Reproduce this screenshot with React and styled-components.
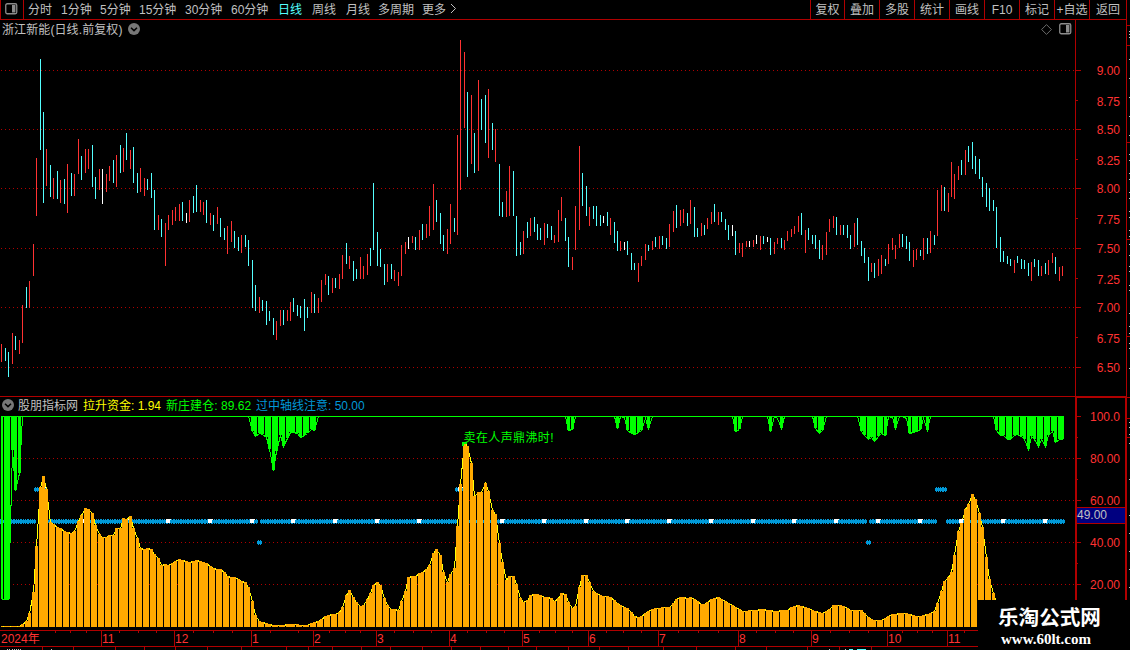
import React from "react";
import styled, { createGlobalStyle } from "styled-components";

const C = {
  line: "#b00000",
  text: "#c0c0c0",
  red: "#ff3232",
  cyan: "#54ffff",
  green: "#00ff00",
  yellow: "#ffff00",
  orange: "#ffaa00",
  blue: "#0099d8",
};

const GlobalStyle = createGlobalStyle`
  html, body { margin: 0; background: #000; overflow: hidden; }
  body { font-family: "Liberation Sans", "Noto Sans CJK SC", sans-serif; font-size: 12px; color: ${C.text}; }
  svg { display: block; }
`;

const Screen = styled.div`
  position: relative;
  width: 1130px;
  height: 650px;
  overflow: hidden;
  display: grid;
  grid-template-columns: 1127px 3px;
  background: #000;
`;

const Terminal = styled.div`
  display: flex;
  flex-direction: column;
`;

const Toolbar = styled.div`
  box-sizing: border-box;
  height: 20px;
  display: flex;
  justify-content: space-between;
  border: solid ${C.line};
  border-width: 0 1px 1px 1px;
`;

const ToolGroup = styled.div`
  display: flex;
`;

const PanelToggle = styled.div`
  box-sizing: border-box;
  width: 23px;
  padding: 3px 0 0 4px;
  margin-right: 4px;
  border-right: 1px solid ${C.line};
`;

const Period = styled.span`
  width: ${(p) => p.$w}px;
  line-height: 20px;
  height: 19px;
  white-space: nowrap;
  color: ${(p) => (p.$active ? C.cyan : C.text)};
`;

const Action = styled.span`
  box-sizing: border-box;
  width: ${(p) => p.$w}px;
  height: 19px;
  border-left: 1px solid ${C.line};
  line-height: 20px;
  text-align: center;
  white-space: nowrap;
`;

const Pane = styled.section`
  display: grid;
  grid-template-columns: 1075px 52px;
  height: ${(p) => p.$h}px;
`;

const Plot = styled.div`
  display: flex;
  flex-direction: column;
`;

const PlotHeader = styled.div`
  display: flex;
  align-items: center;
  height: ${(p) => p.$h}px;
  padding: 0 3px 0 2px;
  white-space: nowrap;
`;

const Title = styled.span`
  width: 126px;
  padding-bottom: 2px;
  letter-spacing: 0.1px;
`;

const HeaderIcons = styled.div`
  display: flex;
  align-items: center;
  gap: 7px;
  margin-left: auto;
`;

const Reading = styled.span`
  width: ${(p) => p.$w}px;
  padding-bottom: 2px;
  color: ${(p) => p.$color};
  letter-spacing: ${(p) => p.$ls || 0}px;
`;

const IndicatorName = styled(Reading)`
  box-sizing: border-box;
  padding-left: 4px;
`;

const Axis = styled.div`
  box-sizing: border-box;
  position: relative;
  border: solid ${C.line};
  border-width: ${(p) => (p.$framed ? "2px 2px 0 2px" : "0 1px 0 1px")};
  height: 100%;
`;

const Scale = styled.div`
  display: flex;
  flex-direction: column;
  align-items: flex-end;
  padding: ${(p) => p.$top}px ${(p) => p.$right}px 0 0;
`;

const ScaleLabel = styled.span`
  height: ${(p) => p.$h}px;
  line-height: 14px;
  color: ${C.red};
`;

const Ticks = styled.svg`
  position: absolute;
  left: 0;
  top: 0;
`;

const CurrentValue = styled.div`
  box-sizing: border-box;
  position: absolute;
  left: 0;
  right: 0;
  top: 109px;
  height: 17px;
  border: solid ${C.line};
  border-width: 1px 0;
  background: #000080;
  line-height: 14px;
`;

const Months = styled.div`
  box-sizing: border-box;
  position: relative;
  display: flex;
  width: 978px;
  height: 17px;
  border: solid ${C.line};
  border-width: 1px 0;
`;

const Month = styled.span`
  box-sizing: border-box;
  width: ${(p) => p.$w}px;
  padding-left: ${(p) => (p.$first ? "1px" : "0")};
  border-left: ${(p) => (p.$first ? "0" : `1px solid ${C.line}`)};
  line-height: 16px;
  height: 15px;
  color: ${C.red};
  white-space: nowrap;
`;

const Rule = styled.div`
  height: 1px;
  background: ${C.line};
`;

const Watermark = styled.div`
  position: absolute;
  left: 978px;
  top: 600px;
  width: 152px;
  height: 50px;
  background: #000;
  color: #fff;
`;

const SiteName = styled.div`
  height: 25px;
  padding: 6px 0 0 20px;
  font: 700 20.6px/24px "Liberation Sans", "Noto Sans CJK SC", sans-serif;
  white-space: nowrap;
`;

const SiteUrl = styled.div`
  padding-left: 23px;
  font: bold 15px/17px "Liberation Serif", serif;
  white-space: nowrap;
`;

const periods = [
  ["分时", 33], ["1分钟", 39], ["5分钟", 39], ["15分钟", 46], ["30分钟", 46], ["60分钟", 47],
  ["日线", 34], ["周线", 34], ["月线", 32], ["多周期", 44], ["更多", 28],
];
const actions = [
  ["复权", 34], ["叠加", 35], ["多股", 35], ["统计", 35], ["画线", 35], ["F10", 35],
  ["标记", 35], ["+自选", 35], ["返回", 37],
];

// Each entry: x, high, low, direction (r = up, c = down, w = flat)
const candles = `1,344,362,r 5,348,361,c 8,352,377,c 12,333,364,r 15,336,350,c 19,340,354,r 22,305,343,r 26,287,308,c 29,281,308,r 33,244,276,r 36,158,216,r 40,59,150,c 43,112,203,c 46,149,186,r 50,165,197,c 53,178,199,r 57,171,199,c 60,180,203,r 64,179,204,c 67,164,213,r 71,173,196,c 74,174,196,r 78,139,174,r 81,156,180,c 85,149,173,r 88,149,169,r 92,145,187,c 95,177,199,c 99,169,190,r 102,169,204,w 106,174,192,r 109,166,181,r 113,160,183,c 116,155,187,r 120,145,173,c 123,148,172,r 126,133,160,c 130,150,169,r 133,147,183,c 137,173,193,c 140,168,192,r 144,178,196,r 147,179,190,c 151,173,198,c 154,190,230,c 158,215,230,r 161,219,237,c 165,223,266,r 168,215,230,r 172,210,225,r 175,207,221,r 179,204,221,r 182,202,221,c 186,213,223,w 189,200,222,r 193,196,213,c 196,185,212,c 200,200,212,r 203,202,215,r 206,200,223,c 210,213,225,r 213,215,231,c 217,207,224,r 220,218,237,c 224,228,240,c 227,226,254,r 231,221,242,r 234,231,248,c 238,237,251,c 241,235,253,r 245,235,247,c 248,240,266,c 252,260,308,c 255,285,311,c 259,297,313,r 262,300,311,c 266,301,325,c 269,311,321,c 273,318,335,c 276,321,340,r 280,310,326,r 283,310,325,c 287,310,321,r 290,302,321,r 293,298,312,c 297,305,316,c 300,306,318,c 304,299,331,c 307,307,318,c 311,292,313,r 314,294,313,c 318,298,313,r 321,280,302,r 325,274,285,r 328,276,295,c 332,278,293,r 335,278,288,c 339,274,289,r 342,255,279,r 346,243,264,c 349,256,269,r 353,261,281,c 356,269,279,c 360,257,279,r 363,266,279,r 367,254,275,r 370,248,266,c 373,183,250,c 377,232,266,c 380,249,267,c 384,264,285,c 387,264,282,r 391,264,279,c 394,270,281,r 398,272,286,r 401,245,276,r 405,242,254,r 408,237,249,w 412,236,243,r 415,237,250,c 419,230,250,r 422,224,240,c 426,224,238,r 429,206,236,r 433,184,230,r 436,200,222,c 440,213,244,c 443,235,251,c 447,229,254,r 450,204,244,r 454,218,232,c 457,135,235,r 460,40,190,r 464,52,128,r 467,92,177,c 471,95,164,r 474,133,173,c 478,80,171,r 481,99,130,c 485,95,143,c 488,89,158,r 492,123,150,c 495,129,162,r 499,164,216,c 502,202,217,c 506,191,217,r 509,166,216,r 513,171,216,c 516,216,256,c 520,242,255,c 523,231,254,r 527,222,238,c 530,218,236,r 534,217,232,c 537,224,240,c 540,228,240,c 544,223,245,r 547,224,238,c 551,226,240,c 554,235,243,r 558,210,242,r 561,197,221,r 565,218,241,c 568,237,267,c 572,257,270,r 575,206,250,r 579,146,230,r 582,173,206,c 586,186,216,c 589,207,226,r 593,206,219,c 596,206,226,c 600,215,226,c 603,216,223,w 607,212,226,c 610,218,235,r 614,222,243,c 617,231,251,c 620,241,251,r 624,242,250,w 627,241,255,c 631,253,270,c 634,263,270,c 638,263,282,r 641,256,266,r 645,244,260,r 648,245,251,c 652,241,250,r 655,237,247,c 659,236,249,r 662,236,245,c 666,238,249,c 669,224,247,r 673,211,232,r 676,205,228,c 680,210,226,r 683,209,223,r 687,213,226,c 690,200,224,r 694,207,237,c 697,228,237,c 701,223,236,r 704,225,235,c 707,218,229,r 711,212,224,r 714,204,222,c 718,212,225,r 721,212,222,c 725,219,230,c 728,225,240,c 732,225,236,w 735,231,255,c 739,243,253,r 742,243,257,r 746,241,247,r 749,241,247,w 753,240,247,r 756,235,244,w 760,236,250,r 763,236,244,c 767,237,242,w 770,238,255,c 774,242,254,r 777,238,244,r 781,238,248,c 784,240,250,r 787,231,241,r 791,229,237,r 794,226,234,r 798,216,232,r 801,213,235,c 805,230,253,r 808,228,240,c 812,235,244,c 815,235,249,c 819,240,259,c 822,245,260,r 826,232,255,r 829,219,232,r 833,216,228,r 836,217,235,c 840,225,235,r 843,225,235,c 847,225,238,c 850,235,249,c 854,223,247,r 857,218,245,c 861,241,256,c 864,248,263,c 868,257,281,c 871,263,272,r 874,263,278,c 878,259,276,r 881,255,274,r 885,259,266,c 888,244,264,r 892,238,250,r 895,245,259,r 899,234,248,r 902,234,247,c 906,236,249,c 909,242,261,c 913,250,267,r 916,249,260,r 920,250,256,c 923,238,260,r 927,238,254,c 930,231,253,r 934,235,245,c 937,190,236,r 941,185,211,r 944,187,211,c 948,193,212,r 951,162,197,r 954,174,199,r 958,166,180,r 961,160,175,c 965,150,175,r 968,146,162,c 972,142,169,c 975,156,174,c 979,159,179,c 982,177,197,c 986,183,207,c 989,188,211,c 993,200,211,c 996,207,248,c 1000,237,262,c 1003,251,262,c 1007,256,264,c 1010,259,266,c 1014,260,273,r 1017,256,263,c 1021,259,269,c 1024,260,269,c 1028,263,276,c 1031,262,281,r 1034,259,267,c 1038,260,276,c 1041,266,276,r 1045,263,274,c 1048,260,275,r 1052,253,263,r 1055,257,274,c 1059,267,281,r 1062,266,276,r`
  .split(" ")
  .map((s) => {
    const [x, hi, lo, dir] = s.split(",");
    return { x: +x, hi: +hi, lo: +lo, dir };
  });

const curve = (s) => s.split(" ").map((p) => p.split(",").map(Number));

const fundCurve = curve(
  "1,626 19,626 22,624 26,621 29,613 33,592 36,546 40,487 43,476 46,489 50,522 53,523.5 57,527 60,528 64,531 67,532 71,533 74,531 78,521 81,515 85,508 88,509 92,513 95,525 99,534 102,537 106,537 109,535 113,534.5 116,528 120,528 123,518 126,519 130,516 133,528 137,538 140,548 144,549 147,548 151,549 154,554 158,558 161,564.5 165,564 168,564.5 172,562.5 175,560.5 179,559 182,560 189,562 193,561 196,560 202,562 206,563 210,566 213,568 220,569 224,572 227,576 234,577 238,579 241,581 245,582 248,587 252,601 255,615 259,621 266,622.5 273,625 283,625 290,624 307,625 313,622 320,620 325,616 332,614 336,614.5 341,610 343,603 346.5,594 349.5,589 353,597 357,603 360.5,606.5 364,604 368,597 371,590.5 374,582 378,582 381,586.5 384,598 387,605 391,608.5 398.5,610 401.5,599 405,590.5 408,577 412,575.5 415,576 419,573 424,571 429,565 433,553 436,549 440,555 443,572 447,582 450,574 454,568 457,526 460,484 464,442 467,446 471,463 474,496 478,492 482,492 485,483 489,493 492,510 495,514 499,543 502,562 506,580 509,576 513.5,576 516,584 519.5,597 523,601.5 527,600 530,595 537,594 544,596.5 551,598 554,601 558,597.5 561,593 565,594 568.5,603 572.5,609 576,605 579,587 582,575 587,575 590,586 594,592 600,595 605,596 611,597 617,603 621.5,606 628,608 633,615 637,617 642,616 647,611 653,608.5 660,607.5 670,607 677,598 681,596 687,598 692,597 697,601 702,605 707,601.5 712,598 718,597 723,600 730,604 737,608 742,611 752,610 763,609 777,611 787,609.5 793,606 798,604.5 805,607 812,609.5 822,613 827,611 833,605 842,605.5 850,609.5 862,610.5 867,616 872,619.5 877,620.5 883,619 890,615 897,613 907,613.5 917,616.5 923,614.5 933,613 937,603 941.5,590 944,581 948,577 952,570 954.5,551 958,531 962,520 965,509 968.5,503 972,494 976,501 979,513 983,532 986,557 989,579 993,593 996,603 1003,621 1010,626 1063,623"
);

const buildCurve = curve(
  "1,599 8,599 12,450 15,490 19,473 22,416 248,416 252,431 255,435.5 259,432.5 262,434 266,437 269,449 273,470 276,451 280,435 283,446 287,438 290,432 293,432 297,433 300,437 304,435 307,433 311,429 314,430 318,416 565,416 568,430 572,429 575,416 614,416 617,428 620,416 624,417 627,430 631,433 634,434 638,432 641,430 645,418 648,428 652,416 732,416 735,431 739,429 742,416 767,416 770,431 774,416 777,418 781,428 784,416 812,416 815,428 819,433 822,430 826,416 857,416 861,431 864,435 868,439 871,437 874,441 878,436 881,433 885,435 888,416 892,417 895,428 899,416 902,416 906,418 909,433 913,432 916,431 920,429 923,418 927,430 930,416 993,416 996,430 1000,435 1003,435 1007,439 1010,439 1014,435 1017,434 1021,436 1024,439 1028,449 1031,436 1034,439 1038,446 1041,439 1045,446 1048,435 1052,431 1055,442 1059,439 1062,439"
);

function sample(points, x) {
  if (x <= points[0][0]) return points[0][1];
  for (let i = 1; i < points.length; i++) {
    const [x1, y1] = points[i];
    if (x <= x1) {
      const [x0, y0] = points[i - 1];
      return y0 + ((y1 - y0) * (x - x0)) / (x1 - x0);
    }
  }
  return points[points.length - 1][1];
}

const bars = candles.map(({ x }, i) => ({
  x,
  i,
  fund: Math.round(sample(fundCurve, x)),
  build: Math.round(sample(buildCurve, x)),
}));

function markLevel(x) {
  if ((x >= 36 && x <= 43) || (x >= 457 && x <= 464) || (x >= 937 && x <= 944)) return 489;
  if (x === 259 || x === 868) return 542;
  return 521;
}

const candleColor = { r: C.red, c: C.cyan, w: "#ffffff" };

const GridLines = ({ ys, width }) =>
  ys.map((y) => (
    <line key={y} x1="1" x2={width} y1={y + 0.5} y2={y + 0.5} stroke={C.line} strokeDasharray="1 3" />
  ));

const CandleChart = () => (
  <svg width="1075" height="358" viewBox="0 38 1075 358" shapeRendering="crispEdges">
    <GridLines ys={[70, 129, 188, 248, 307, 367]} width={1075} />
    {candles.map((k) => (
      <rect key={k.x} x={k.x} y={k.hi} width="1" height={k.lo - k.hi} fill={candleColor[k.dir]} />
    ))}
  </svg>
);

const Mark = ({ x, y }) => (
  <path
    fill={C.blue}
    d={`M${x - 2} ${y - 1}h5v3h-5z M${x - 1} ${y - 2}h1v1h-1z M${x + 1} ${y - 2}h1v1h-1z M${x - 1} ${y + 2}h1v1h-1z M${x + 1} ${y + 2}h1v1h-1z`}
  />
);

const WhiteMark = ({ x, y }) => (
  <path fill="#fff" d={`M${x - 2} ${y - 2}h5v1h-1v3h-4z`} />
);

const IndicatorChart = () => (
  <svg width="1075" height="217" viewBox="0 413 1075 217" shapeRendering="crispEdges">
    <GridLines ys={[458, 500, 542, 584]} width={1075} />
    {bars.map((b) => <Mark key={b.x} x={b.x} y={markLevel(b.x)} />)}
    {bars.filter((b) => b.i > 0 && b.i % 12 === 0).map((b) => (
      <WhiteMark key={b.x} x={b.x} y={markLevel(b.x)} />
    ))}
    <polyline
      fill="none"
      stroke={C.yellow}
      points={bars.map((b) => `${b.x + 0.5},${b.fund + 0.5}`).join(" ")}
    />
    {bars.map((b) => (
      <rect key={b.x} x={Math.max(1, b.x - 1)} y={b.fund} width={b.x === 1 ? 2 : 3} height={Math.max(1, 627 - b.fund)} fill={C.orange} />
    ))}
    <WhiteMark x={961} y={521} />
    <polyline
      fill="none"
      stroke={C.green}
      points={bars.map((b) => `${b.x + 0.5},${b.build + 0.5}`).join(" ")}
    />
    {bars.filter((b) => b.build > 418).map((b) => (
      <rect key={b.x} x={Math.max(1, b.x - 1)} y="416" width={b.x === 1 ? 2 : 3} height={b.build - 416} fill={C.green} />
    ))}
    <rect x="1" y="416" width="1063" height="1" fill={C.green} />
    <path d="M462 442h5v2h-3v2h-2z" fill={C.green} />
    <text x="463.5" y="441.5" fill={C.green} fontSize="12" textLength="90">卖在人声鼎沸时!</text>
  </svg>
);

const PanelIcon = ({ color = "#8c8c8c" }) => (
  <svg width="13" height="12" viewBox="0 0 13 12">
    <rect x="0.75" y="0.75" width="11" height="10" rx="1.5" fill="none" stroke={color} strokeWidth="1.3" />
    <rect x="7" y="2" width="3.4" height="7.5" fill={color} />
  </svg>
);

const Chevron = () => (
  <svg width="12" height="12" viewBox="0 0 12 12">
    <circle cx="6" cy="6" r="6" fill="#777" />
    <path d="M3 4.8l3 2.8 3-2.8" fill="none" stroke="#000" strokeWidth="1.5" />
  </svg>
);

const Diamond = () => (
  <svg width="11" height="11" viewBox="0 0 11 11">
    <path d="M5.5 0.6L10.4 5.5L5.5 10.4L0.6 5.5Z" fill="none" stroke="#777" strokeWidth="0.9" />
  </svg>
);

const MoreArrow = () => (
  <svg width="7" height="18" viewBox="0 0 7 18">
    <path d="M1 4l4.5 4.5L1 13" fill="none" stroke={C.text} />
  </svg>
);

const priceScale = [
  ["9.00", 31], ["8.75", 28], ["8.50", 31], ["8.25", 28], ["8.00", 31], ["7.75", 29],
  ["7.50", 31], ["7.25", 28], ["7.00", 31], ["6.75", 29], ["6.50", 20],
];
const levelScale = ["100.0", "80.00", "60.00", "40.00", "20.00"];

const months = [
  ["2024年", 101], ["11", 73], ["12", 77], ["1", 62], ["2", 63], ["3", 73], ["4", 73], ["5", 66],
  ["6", 70], ["7", 80], ["8", 73], ["9", 76], ["10", 60], ["11", 31],
];
const weekTicks = [55, 70, 86, 119, 138, 156, 193, 213, 232, 270, 298, 329, 345, 360, 394, 413, 431, 467, 486, 504, 539, 555, 572, 606, 623, 641, 678, 698, 718, 756, 775, 793, 830, 849, 868, 902, 917, 932, 964];
const footerTicks = [42, 73, 115, 144, 175, 207, 241, 286, 308, 332, 361, 390, 422, 451, 480, 508, 536, 568, 599, 628, 663, 696, 735, 766, 807, 839, 871];
const footerDots = [7, 9, 12, 14, 16, 18, 20, 51, 829, 845];

const sideLines = [25, 45, 142, 239, 336, 397, 418, 437];
const sideDots = [31, 34, 37, 59, 78, 97, 116, 135, 154, 160, 173, 179, 192, 198, 211, 217, 230, 236, 244, 255, 266, 271, 285, 290, 313, 326, 333, 343, 348, 368, 422, 427, 434, 443, 479, 515, 533, 551, 569, 587];

export default function App() {
  return (
    <>
      <GlobalStyle />
      <Screen>
        <Terminal>
          <Toolbar>
            <ToolGroup>
              <PanelToggle><PanelIcon /></PanelToggle>
              {periods.map(([label, w]) => (
                <Period key={label} $w={w} $active={label === "日线"}>{label}</Period>
              ))}
              <MoreArrow />
            </ToolGroup>
            <ToolGroup>
              {actions.map(([label, w]) => <Action key={label} $w={w}>{label}</Action>)}
            </ToolGroup>
          </Toolbar>

          <Pane $h={376}>
            <Plot>
              <PlotHeader $h={18}>
                <Title>浙江新能(日线.前复权)</Title>
                <Chevron />
                <HeaderIcons>
                  <Diamond />
                  <PanelIcon />
                </HeaderIcons>
              </PlotHeader>
              <CandleChart />
            </Plot>
            <Axis>
              <Ticks width="8" height="376" viewBox="1076 20 8 376" shapeRendering="crispEdges">
                {[70, 129, 188, 248, 307, 367].map((y) => <rect key={y} x="1076" y={y} width="5" height="1" fill={C.line} />)}
                {[100, 159, 218, 278, 337].map((y) => <rect key={y} x="1076" y={y} width="2" height="1" fill={C.line} />)}
              </Ticks>
              <Scale $top={44} $right={6}>
                {priceScale.map(([v, h]) => <ScaleLabel key={v} $h={h}>{v}</ScaleLabel>)}
              </Scale>
            </Axis>
          </Pane>

          <Pane $h={234}>
            <Plot>
              <Rule />
              <PlotHeader $h={16}>
                <Chevron />
                <IndicatorName $w={69} $color={C.text}>股朋指标网</IndicatorName>
                <Reading $w={83} $color={C.yellow}>拉升资金: 1.94</Reading>
                <Reading $w={90} $color={C.green} $ls={0.05}>新庄建仓: 89.62</Reading>
                <Reading $w={120} $color={C.blue}>过中轴线注意: 50.00</Reading>
              </PlotHeader>
              <IndicatorChart />
            </Plot>
            <Axis $framed>
              <Ticks width="6" height="230" viewBox="1077 398 6 230" shapeRendering="crispEdges">
                {[416, 458, 500, 542, 584].map((y) => <rect key={y} x="1077" y={y} width="4" height="1" fill={C.line} />)}
                {[437, 479, 563].map((y) => <rect key={y} x="1077" y={y} width="1" height="1" fill={C.line} />)}
              </Ticks>
              <Scale $top={12} $right={5}>
                {levelScale.map((v) => <ScaleLabel key={v} $h={42}>{v}</ScaleLabel>)}
              </Scale>
              <CurrentValue>49.00</CurrentValue>
            </Axis>
          </Pane>

          <Months>
            {months.map(([m, w], i) => <Month key={i} $w={w} $first={i === 0}>{m}</Month>)}
            <Ticks width="978" height="3" shapeRendering="crispEdges">
              {weekTicks.map((x) => <rect key={x} x={x} y="0" width="1" height="2" fill={C.line} />)}
            </Ticks>
          </Months>
          <svg width="978" height="3" shapeRendering="crispEdges">
            {footerTicks.map((x) => <rect key={x} x={x} y="0" width="1" height="3" fill={C.line} />)}
            {footerDots.map((x) => <rect key={x} x={x} y="2" width="1" height="1" fill={C.text} />)}
            <path d="M849 2h4v1h-4z M857 2h9v1h-9z" fill={C.cyan} />
          </svg>
        </Terminal>

        <svg width="3" height="650" shapeRendering="crispEdges">
          {sideLines.map((y) => <rect key={y} x="0" y={y} width="3" height="1" fill={C.line} />)}
          {sideDots.map((y) => <rect key={y} x="2" y={y} width="1" height="1" fill={C.text} />)}
        </svg>

        <Watermark>
          <SiteName>乐淘公式网</SiteName>
          <SiteUrl>www.60lt.com</SiteUrl>
        </Watermark>
      </Screen>
    </>
  );
}
